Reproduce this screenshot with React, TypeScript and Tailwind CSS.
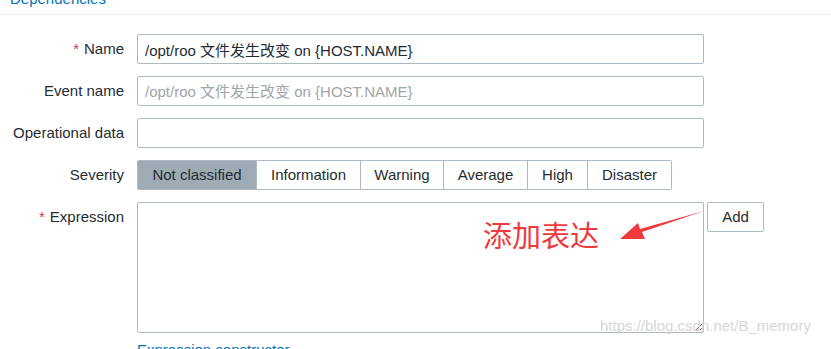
import React from 'react';

const severities = ['Not classified', 'Information', 'Warning', 'Average', 'High', 'Disaster'];
const sevWidths = ['w-[120px]', 'w-[104px]', 'w-[83px]', 'w-[84px]', 'w-[60px]', 'w-[84px]'];

function Label({ text, required }: { text: string; required?: boolean }) {
  return (
    <div className="w-[125px] shrink-0 h-[30px] flex items-center justify-end pr-px text-[15px] text-[#1f2c33]">
      {required && <span className="text-[#e33734] mr-[5px]">*</span>}
      {text}
    </div>
  );
}

export default function App() {
  return (
    <div
      className="relative w-[831px] h-[349px] overflow-hidden bg-white"
      style={{ fontFamily: '"Liberation Sans", Arial, "Noto Sans CJK SC", sans-serif' }}
    >
      {/* Tab header, cut off at the top */}
      <div className="h-[15px] overflow-hidden border-b border-[#ebeeef]">
        <div className="-mt-[12px] pl-[10px] text-[15px] text-[#0275b8]">Dependencies</div>
      </div>

      {/* Form */}
      <div className="pt-[19px] flex flex-col gap-[12px]">
        <div className="flex gap-[12px]">
          <Label text="Name" required />
          <input
            className="w-[567px] h-[30px] px-[7px] border border-[#acbbc2] rounded-[2px] text-[15px] text-[#1f2c33] outline-none"
            defaultValue="/opt/roo 文件发生改变 on {HOST.NAME}"
          />
        </div>
        <div className="flex gap-[12px]">
          <Label text="Event name" />
          <input
            className="w-[567px] h-[30px] px-[7px] border border-[#acbbc2] rounded-[2px] text-[15px] outline-none placeholder:text-[#a0a6aa]"
            placeholder="/opt/roo 文件发生改变 on {HOST.NAME}"
          />
        </div>
        <div className="flex gap-[12px]">
          <Label text="Operational data" />
          <input className="w-[567px] h-[30px] px-[7px] border border-[#acbbc2] rounded-[2px] text-[15px] outline-none" />
        </div>
        <div className="flex gap-[12px]">
          <Label text="Severity" />
          <div className="flex h-[30px]">
            {severities.map((s, i) => (
              <div
                key={s}
                className={
                  'h-[30px] flex items-center justify-center text-[15px] text-[#1f2c33] border-y border-r border-[#acbbc2] ' +
                  sevWidths[i] +
                  (i === 0 ? ' border-l bg-[#9eabb4] border-[#8c9ba4] rounded-l-[2px]' : ' bg-white') +
                  (i === severities.length - 1 ? ' rounded-r-[2px]' : '')
                }
              >
                {s}
              </div>
            ))}
          </div>
        </div>
        <div className="flex gap-[12px]">
          <Label text="Expression" required />
          <div className="flex flex-col">
            <textarea className="w-[567px] h-[131px] border border-[#acbbc2] rounded-[2px] outline-none resize" />
            <div className="mt-[9px] text-[15px] text-[#0275b8] leading-[16px]">Expression constructor</div>
          </div>
          <button className="-ml-[9px] w-[57px] h-[30px] border border-[#acbbc2] rounded-[2px] bg-white text-[15px] text-[#1f2c33]">
            Add
          </button>
        </div>
      </div>

      {/* Annotation */}
      <div
        className="absolute left-[483px] top-[215px] text-[29px] leading-[38px] text-[#f0393c]"
        style={{ fontFamily: '"Noto Sans CJK SC", sans-serif' }}
      >
        添加表达
      </div>
      <svg className="absolute left-[612px] top-[205px]" width="95" height="40" viewBox="0 0 95 40">
        <path d="M92 6 L30 27 L33 34 L8 34 L26 18 L28 24 Z" fill="#f0393c" />
      </svg>

      {/* Watermark */}
      <div className="absolute left-[600px] top-[315px] text-[15px] text-[#d6d6d6]">
        https://blog.csdn.net/B_memory
      </div>
    </div>
  );
}
